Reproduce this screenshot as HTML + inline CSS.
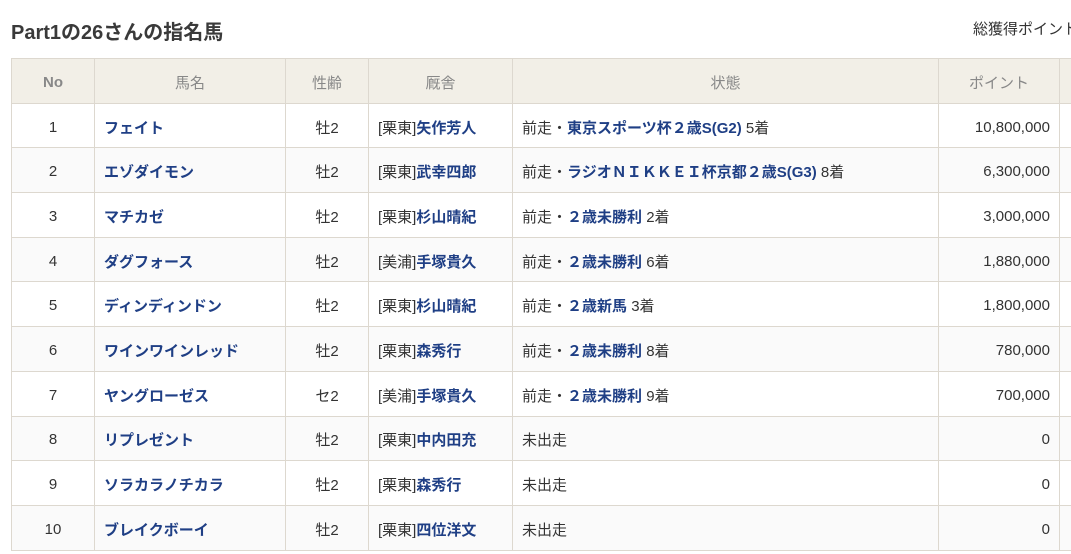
<!DOCTYPE html>
<html><head><meta charset="utf-8"><style>
body{margin:0;background:#fff;font-family:"Liberation Sans","Noto Sans CJK JP",sans-serif;color:#333;width:1071px;height:554px;overflow:hidden;position:relative}
h1{position:absolute;left:11px;top:19px;margin:0;font-size:20px;font-weight:bold;color:#3a3a3a;line-height:28px}
.tot{position:absolute;left:973px;top:18px;font-size:15px;color:#333;white-space:nowrap}
table{position:absolute;left:11px;top:58px;border-collapse:collapse;table-layout:fixed;width:1080px;font-size:15px}
tr{height:44.7px}
td,th{border:1px solid #ddd8cf;padding:3px 9px 0;white-space:nowrap;overflow:hidden}
th{background:#f2efe7;color:#888;font-weight:normal}
th:first-child{font-weight:bold}
tr:nth-child(odd) td{background:#fafafa}
.c{text-align:center}.r{text-align:right}
a{color:#1f3f85;font-weight:bold;text-decoration:none}
</style></head><body>
<h1>Part1の26さんの指名馬</h1>
<div class="tot">総獲得ポイント</div>
<table>
<colgroup><col style="width:83px"><col style="width:191px"><col style="width:83px"><col style="width:144px"><col style="width:426px"><col style="width:121px"><col style="width:32px"></colgroup>
<tr><th>No</th><th>馬名</th><th>性齢</th><th>厩舎</th><th>状態</th><th>ポイント</th><th></th></tr>
<tr><td class="c">1</td><td><a>フェイト</a></td><td class="c">牡2</td><td>[栗東]<a>矢作芳人</a></td><td>前走・<a>東京スポーツ杯２歳S(G2)</a> 5着</td><td class="r">10,800,000</td><td></td></tr>
<tr><td class="c">2</td><td><a>エゾダイモン</a></td><td class="c">牡2</td><td>[栗東]<a>武幸四郎</a></td><td>前走・<a>ラジオＮＩＫＫＥＩ杯京都２歳S(G3)</a> 8着</td><td class="r">6,300,000</td><td></td></tr>
<tr><td class="c">3</td><td><a>マチカゼ</a></td><td class="c">牡2</td><td>[栗東]<a>杉山晴紀</a></td><td>前走・<a>２歳未勝利</a> 2着</td><td class="r">3,000,000</td><td></td></tr>
<tr><td class="c">4</td><td><a>ダグフォース</a></td><td class="c">牡2</td><td>[美浦]<a>手塚貴久</a></td><td>前走・<a>２歳未勝利</a> 6着</td><td class="r">1,880,000</td><td></td></tr>
<tr><td class="c">5</td><td><a>ディンディンドン</a></td><td class="c">牡2</td><td>[栗東]<a>杉山晴紀</a></td><td>前走・<a>２歳新馬</a> 3着</td><td class="r">1,800,000</td><td></td></tr>
<tr><td class="c">6</td><td><a>ワインワインレッド</a></td><td class="c">牡2</td><td>[栗東]<a>森秀行</a></td><td>前走・<a>２歳未勝利</a> 8着</td><td class="r">780,000</td><td></td></tr>
<tr><td class="c">7</td><td><a>ヤングローゼス</a></td><td class="c">セ2</td><td>[美浦]<a>手塚貴久</a></td><td>前走・<a>２歳未勝利</a> 9着</td><td class="r">700,000</td><td></td></tr>
<tr><td class="c">8</td><td><a>リプレゼント</a></td><td class="c">牡2</td><td>[栗東]<a>中内田充</a></td><td>未出走</td><td class="r">0</td><td></td></tr>
<tr><td class="c">9</td><td><a>ソラカラノチカラ</a></td><td class="c">牡2</td><td>[栗東]<a>森秀行</a></td><td>未出走</td><td class="r">0</td><td></td></tr>
<tr><td class="c">10</td><td><a>ブレイクボーイ</a></td><td class="c">牡2</td><td>[栗東]<a>四位洋文</a></td><td>未出走</td><td class="r">0</td><td></td></tr>
</table>
</body></html>
